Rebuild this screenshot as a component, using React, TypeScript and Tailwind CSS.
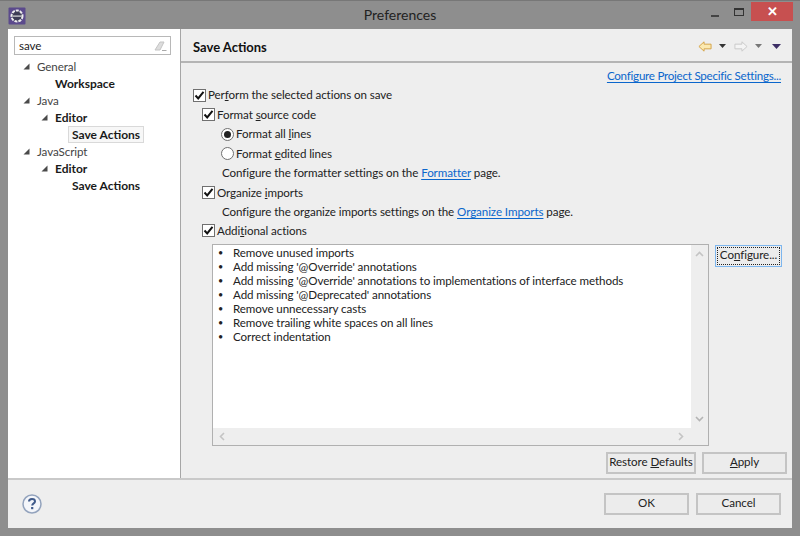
import React from "react";

const U = ({ c }: { c: string }) => <span className="underline underline-offset-1">{c}</span>;

function Tri({ className }: { className: string }) {
  return (
    <svg width="7" height="7" viewBox="0 0 7 7" className={className}>
      <path d="M6.5 0.5V6.5H0.5Z" fill="#4a4a4a" />
    </svg>
  );
}

function Check({ className = "" }: { className?: string }) {
  return (
    <span className={`flex h-[13px] w-[13px] shrink-0 items-center justify-center border border-[#707070] bg-white ${className}`}>
      <svg width="11" height="11" viewBox="0 0 11 11">
        <path d="M1.5 5.5L4.2 8.4L9.5 1.8" fill="none" stroke="#111" strokeWidth="2" />
      </svg>
    </span>
  );
}

function Radio({ on }: { on?: boolean }) {
  return (
    <span className="flex h-[13px] w-[13px] shrink-0 items-center justify-center rounded-full border border-[#707070] bg-white">
      {on && <span className="h-[7px] w-[7px] rounded-full bg-[#222]" />}
    </span>
  );
}

function Btn({ children, className = "" }: { children: React.ReactNode; className?: string }) {
  return (
    <div className={`flex h-[22px] items-center justify-center whitespace-nowrap border-2 border-[#c4c4c4] bg-[#ececec] text-[#222] ${className}`}>
      <span className="pb-[2px]">{children}</span>
    </div>
  );
}

function TreeRow({ indent, tri, bold, selected, label }: { indent: string; tri?: boolean; bold?: boolean; selected?: boolean; label: string }) {
  return (
    <div className={`flex h-[17px] items-center ${indent}`}>
      <span className="flex w-[10px] shrink-0 items-center">{tri && <Tri className="" />}</span>
      <span className={`px-[3px] leading-[15px] ${bold ? "text-[12px] font-bold tracking-normal text-[#1a1a1a]" : "text-[#444]"} ${selected ? "border border-[#d9d9d9] bg-[#f7f7f7]" : "border border-transparent"}`}>
        {label}
      </span>
    </div>
  );
}

const items = [
  "Remove unused imports",
  "Add missing '@Override' annotations",
  "Add missing '@Override' annotations to implementations of interface methods",
  "Add missing '@Deprecated' annotations",
  "Remove unnecessary casts",
  "Remove trailing white spaces on all lines",
  "Correct indentation",
];

export default function App() {
  return (
    <div className="flex h-[536px] w-[800px] flex-col bg-[#8e8e8e] px-[8px] pb-[8px] text-[11.6px] tracking-[-0.08px] text-[#222] font-['Lato',sans-serif]">
      {/* Title bar */}
      <div className="relative -mx-[8px] flex h-[29px] shrink-0 items-center justify-center border-t border-[#777]">
        <svg width="18" height="18" viewBox="0 0 18 18" className="absolute left-[8px] top-[6px]">
          <rect x="0.5" y="0.5" width="17" height="17" rx="1" fill="#5b4a8c" />
          <circle cx="9" cy="9" r="5.5" fill="#3d3d55" stroke="#eee" strokeWidth="2" strokeDasharray="3 1" />
          <rect x="4.5" y="8.5" width="9" height="1.2" fill="#ddd" />
        </svg>
        <span className="text-[14px] leading-[16px] tracking-normal text-[#222]">Preferences</span>
        <div className="absolute right-[7px] top-[1px] flex items-center">
          <span className="mr-[15px] mt-[9px] h-[2px] w-[8px] bg-[#444]" />
          <span className="mr-[7px] h-[8px] w-[10px] border border-t-2 border-[#333]" />
          <span className="flex h-[19px] w-[42px] items-center justify-center bg-[#c75050] text-[13px] font-bold text-white">✕</span>
        </div>
      </div>

      {/* Client */}
      <div className="flex min-h-0 flex-1 flex-col bg-[#eeeeee]">
        <div className="flex min-h-0 flex-1">
          {/* Left */}
          <div className="w-[173px] shrink-0 border-r border-[#a6a6a6] bg-white pl-[6px] pt-[7px]">
            <div className="flex h-[19px] w-[157px] items-center justify-between border border-[#b8b8b8] pl-[4px] pr-[3px]">
              <span>save</span>
              <svg width="13" height="12" viewBox="0 0 13 12">
                <path d="M1 10L6 2H10L6 10Z" fill="#ddd" stroke="#c4c4c4" />
                <path d="M8 10.5H12.5" stroke="#aaa" />
              </svg>
            </div>
            <div className="mt-[3px]">
              <TreeRow indent="pl-[9px]" tri label="General" />
              <TreeRow indent="pl-[27px]" bold label="Workspace" />
              <TreeRow indent="pl-[9px]" tri label="Java" />
              <TreeRow indent="pl-[27px]" tri bold label="Editor" />
              <TreeRow indent="pl-[44px]" bold selected label="Save Actions" />
              <TreeRow indent="pl-[9px]" tri label="JavaScript" />
              <TreeRow indent="pl-[27px]" tri bold label="Editor" />
              <TreeRow indent="pl-[44px]" bold label="Save Actions" />
            </div>
          </div>

          {/* Right */}
          <div className="flex min-w-0 flex-1 flex-col">
            <div className="flex h-[34px] shrink-0 items-center justify-between border-b-2 border-[#b4b4b4] pl-[12px] pr-[11px]">
              <span className="pt-[6px] text-[13px] font-bold tracking-normal text-[#111]">Save Actions</span>
              <div className="flex items-center pt-[2px]">
                <svg width="14" height="13" viewBox="0 0 15 13">
                  <path d="M1 6.5L6.5 1.5V4H14V9H6.5V11.5Z" fill="#fbe9b0" stroke="#d3a043" />
                </svg>
                <svg width="7" height="4" viewBox="0 0 7 4" className="ml-[7px]"><path d="M0 0H7L3.5 4Z" fill="#333" /></svg>
                <svg width="14" height="13" viewBox="0 0 15 13" className="ml-[8px]">
                  <path d="M14 6.5L8.5 1.5V4H1V9H8.5V11.5Z" fill="#f4f4f4" stroke="#c8c8c8" />
                </svg>
                <svg width="7" height="4" viewBox="0 0 7 4" className="ml-[7px]"><path d="M0 0H7L3.5 4Z" fill="#777" /></svg>
                <svg width="9" height="5" viewBox="0 0 9 5" className="ml-[10px]"><path d="M0 0H9L4.5 5Z" fill="#3d2f66" /></svg>
              </div>
            </div>

            <div className="flex min-h-0 flex-1 flex-col pl-[12px] pr-[5px]">
              <div className="mt-[4px] flex h-[17px] justify-end pr-[6px]">
                <span className="tracking-[-0.25px] text-[#0a66cc] underline underline-offset-2">Configure Project Specific Settings...</span>
              </div>

              <div className="mt-[1px] flex h-[20px] items-center gap-[2px]">
                <Check />
                <span>Per<U c="f" />orm the selected actions on save</span>
              </div>
              <div className="flex h-[19px] items-center gap-[2px] pl-[9px]">
                <Check />
                <span>Format <U c="s" />ource code</span>
              </div>
              <div className="flex h-[20px] items-center gap-[2px] pl-[28px]">
                <Radio on />
                <span>Format all <U c="l" />ines</span>
              </div>
              <div className="flex h-[19px] items-center gap-[2px] pl-[28px]">
                <Radio />
                <span>Format <U c="e" />dited lines</span>
              </div>
              <div className="flex h-[20px] items-center pl-[29px]">
                <span>Configure the formatter settings on the <span className="text-[#0a66cc] underline underline-offset-2">Formatter</span> page.</span>
              </div>
              <div className="flex h-[19px] items-center gap-[2px] pl-[9px]">
                <Check />
                <span>Organize <U c="i" />mports</span>
              </div>
              <div className="flex h-[19px] items-center pl-[29px]">
                <span>Configure the organize imports settings on the <span className="text-[#0a66cc] underline underline-offset-2">Organize Imports</span> page.</span>
              </div>
              <div className="flex h-[19px] items-center gap-[2px] pl-[9px]">
                <Check />
                <span>Addi<U c="t" />ional actions</span>
              </div>

              <div className="mt-[4px] flex items-start">
                <div className="ml-[19px] flex h-[202px] w-[497px] shrink-0 flex-col border border-[#b0b0b0] bg-white">
                  <div className="flex min-h-0 flex-1">
                    <div className="min-w-0 flex-1 pl-[4px] pt-[1px]">
                      {items.map((t) => (
                        <div key={t} className="flex h-[14px] items-center leading-[14px]">
                          <span className="w-[16px] shrink-0 pl-[1px] text-[9px]">•</span>
                          <span>{t}</span>
                        </div>
                      ))}
                    </div>
                    <div className="flex w-[17px] shrink-0 flex-col items-center justify-between bg-[#eeeeee] py-[6px]">
                      <svg width="9" height="6" viewBox="0 0 9 6"><path d="M1 5L4.5 1.5L8 5" fill="none" stroke="#c4c4c4" strokeWidth="1.6" /></svg>
                      <svg width="9" height="6" viewBox="0 0 9 6"><path d="M1 1L4.5 4.5L8 1" fill="none" stroke="#b4b4b4" strokeWidth="1.6" /></svg>
                    </div>
                  </div>
                  <div className="flex h-[17px] shrink-0 items-center justify-between bg-[#eeeeee] pl-[6px] pr-[24px]">
                    <svg width="6" height="9" viewBox="0 0 6 9"><path d="M5 1L1.5 4.5L5 8" fill="none" stroke="#c4c4c4" strokeWidth="1.6" /></svg>
                    <svg width="6" height="9" viewBox="0 0 6 9"><path d="M1 1L4.5 4.5L1 8" fill="none" stroke="#c4c4c4" strokeWidth="1.6" /></svg>
                  </div>
                </div>
                <div className="ml-[6px] mt-[1px] flex h-[22px] w-[67px] items-center justify-center border border-[#7db6ee] bg-[#ececec] outline-1 -outline-offset-3 outline-dotted outline-[#222]">
                  <span className="pb-[2px]">Co<U c="n" />figure...</span>
                </div>
              </div>

              <div className="mt-[6px] flex justify-end gap-[6px]">
                <Btn className="w-[90px]">Restore <U c="D" />efaults</Btn>
                <Btn className="w-[85px]"><U c="A" />pply</Btn>
              </div>
            </div>
          </div>
        </div>

        {/* Bottom */}
        <div className="flex h-[50px] shrink-0 items-center justify-between border-t-2 border-[#c9c9c9] pl-[14px] pr-[11px]">
          <svg width="20" height="20" viewBox="0 0 20 20">
            <circle cx="10" cy="10" r="9" fill="#f4f6fa" stroke="#93a3bd" strokeWidth="1.5" />
            <path d="M7 7.5C7 5.8 8.3 5 10 5C11.8 5 13 6 13 7.4C13 9.4 10.2 9.4 10.2 11.6" fill="none" stroke="#3f5a8a" strokeWidth="2" />
            <rect x="9.1" y="13" width="2.2" height="2.2" fill="#3f5a8a" />
          </svg>
          <div className="flex gap-[7px]">
            <Btn className="w-[85px]">OK</Btn>
            <Btn className="w-[85px]">Cancel</Btn>
          </div>
        </div>
      </div>
    </div>
  );
}
